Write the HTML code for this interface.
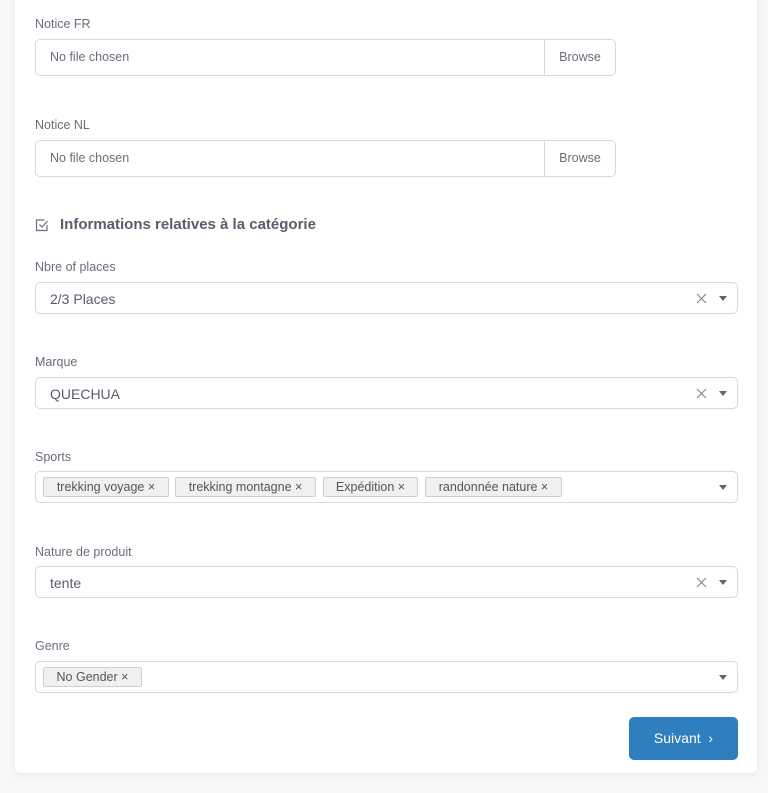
<!DOCTYPE html>
<html><head><meta charset="utf-8"><style>
*{box-sizing:border-box;margin:0;padding:0}
body{width:768px;height:793px;background:#f7f7f8;font-family:"Liberation Sans",sans-serif;position:relative;overflow:hidden}
.card{position:absolute;left:15px;top:-10px;width:742px;height:783px;background:#fff;border-radius:6px;box-shadow:0 2px 8px rgba(0,0,0,.06)}
.lbl{position:absolute;left:35px;font-size:12.5px;color:#6e6b7b}
.box{position:absolute;left:35px;width:703px;border:1px solid #d8d8dd;border-radius:5px;background:#fff}
.file{width:581px;height:37px}
.file span{position:absolute;left:14px;top:10px;font-size:12.5px;color:#6e6b7b}
.file b{position:absolute;right:0;top:0;width:71px;height:35px;border-left:1px solid #d8d8dd;font-weight:normal;font-size:12.5px;color:#6e6b7b;text-align:center;line-height:35px}
.sel{height:32px}
.sel .v{position:absolute;left:14px;top:8px;font-size:14px;color:#5e5b6b}
.x{position:absolute;right:30px;top:10px;width:11px;height:11px}
.ar{position:absolute;right:10px;top:13px;width:0;height:0;border-left:4.5px solid transparent;border-right:4.5px solid transparent;border-top:5px solid #666}
.tag{position:absolute;top:5px;height:20px;background:#f0f0f0;border:1px solid #cfcfcf;border-radius:2px;font-size:12.5px;color:#555;line-height:18px;text-align:center}
h3{position:absolute;left:60px;top:216px;font-size:15px;color:#5e5b6b;font-weight:bold}
.btn{position:absolute;left:629px;top:717px;width:109px;height:43px;background:#2f7fbf;border-radius:5px;color:#fff;font-size:14px;line-height:43px;text-align:center}
</style></head><body>
<div class="card"></div>
<div class="lbl" style="top:17px">Notice FR</div>
<div class="box file" style="top:39px"><span>No file chosen</span><b>Browse</b></div>
<div class="lbl" style="top:118px">Notice NL</div>
<div class="box file" style="top:140px"><span>No file chosen</span><b>Browse</b></div>
<svg style="position:absolute;left:35px;top:218px" width="14" height="14" viewBox="0 0 14 14" fill="none" stroke="#6e6b7b" stroke-width="1.2"><path d="M12 7v5.5H1.5V2h8"/><path d="M4.5 6.5l2.5 2.5L12.5 3"/></svg>
<h3>Informations relatives à la catégorie</h3>
<div class="lbl" style="top:260px">Nbre of places</div>
<div class="box sel" style="top:282px"><div class="v">2/3 Places</div><svg class="x" viewBox="0 0 11 11" stroke="#888" stroke-width="1.2"><path d="M1 1l9 9M10 1l-9 9"/></svg><div class="ar"></div></div>
<div class="lbl" style="top:355px">Marque</div>
<div class="box sel" style="top:377px"><div class="v">QUECHUA</div><svg class="x" viewBox="0 0 11 11" stroke="#888" stroke-width="1.2"><path d="M1 1l9 9M10 1l-9 9"/></svg><div class="ar"></div></div>
<div class="lbl" style="top:450px">Sports</div>
<div class="box sel" style="top:471px">
<div class="tag" style="left:7px;width:126px">trekking voyage ×</div>
<div class="tag" style="left:139px;width:141px">trekking montagne ×</div>
<div class="tag" style="left:287px;width:95px">Expédition ×</div>
<div class="tag" style="left:389px;width:137px">randonnée nature ×</div>
<div class="ar"></div></div>
<div class="lbl" style="top:545px">Nature de produit</div>
<div class="box sel" style="top:566px"><div class="v">tente</div><svg class="x" viewBox="0 0 11 11" stroke="#888" stroke-width="1.2"><path d="M1 1l9 9M10 1l-9 9"/></svg><div class="ar"></div></div>
<div class="lbl" style="top:639px">Genre</div>
<div class="box sel" style="top:661px"><div class="tag" style="left:7px;width:99px">No Gender ×</div><div class="ar"></div></div>
<div class="btn">Suivant &nbsp;›</div>
</body></html>
